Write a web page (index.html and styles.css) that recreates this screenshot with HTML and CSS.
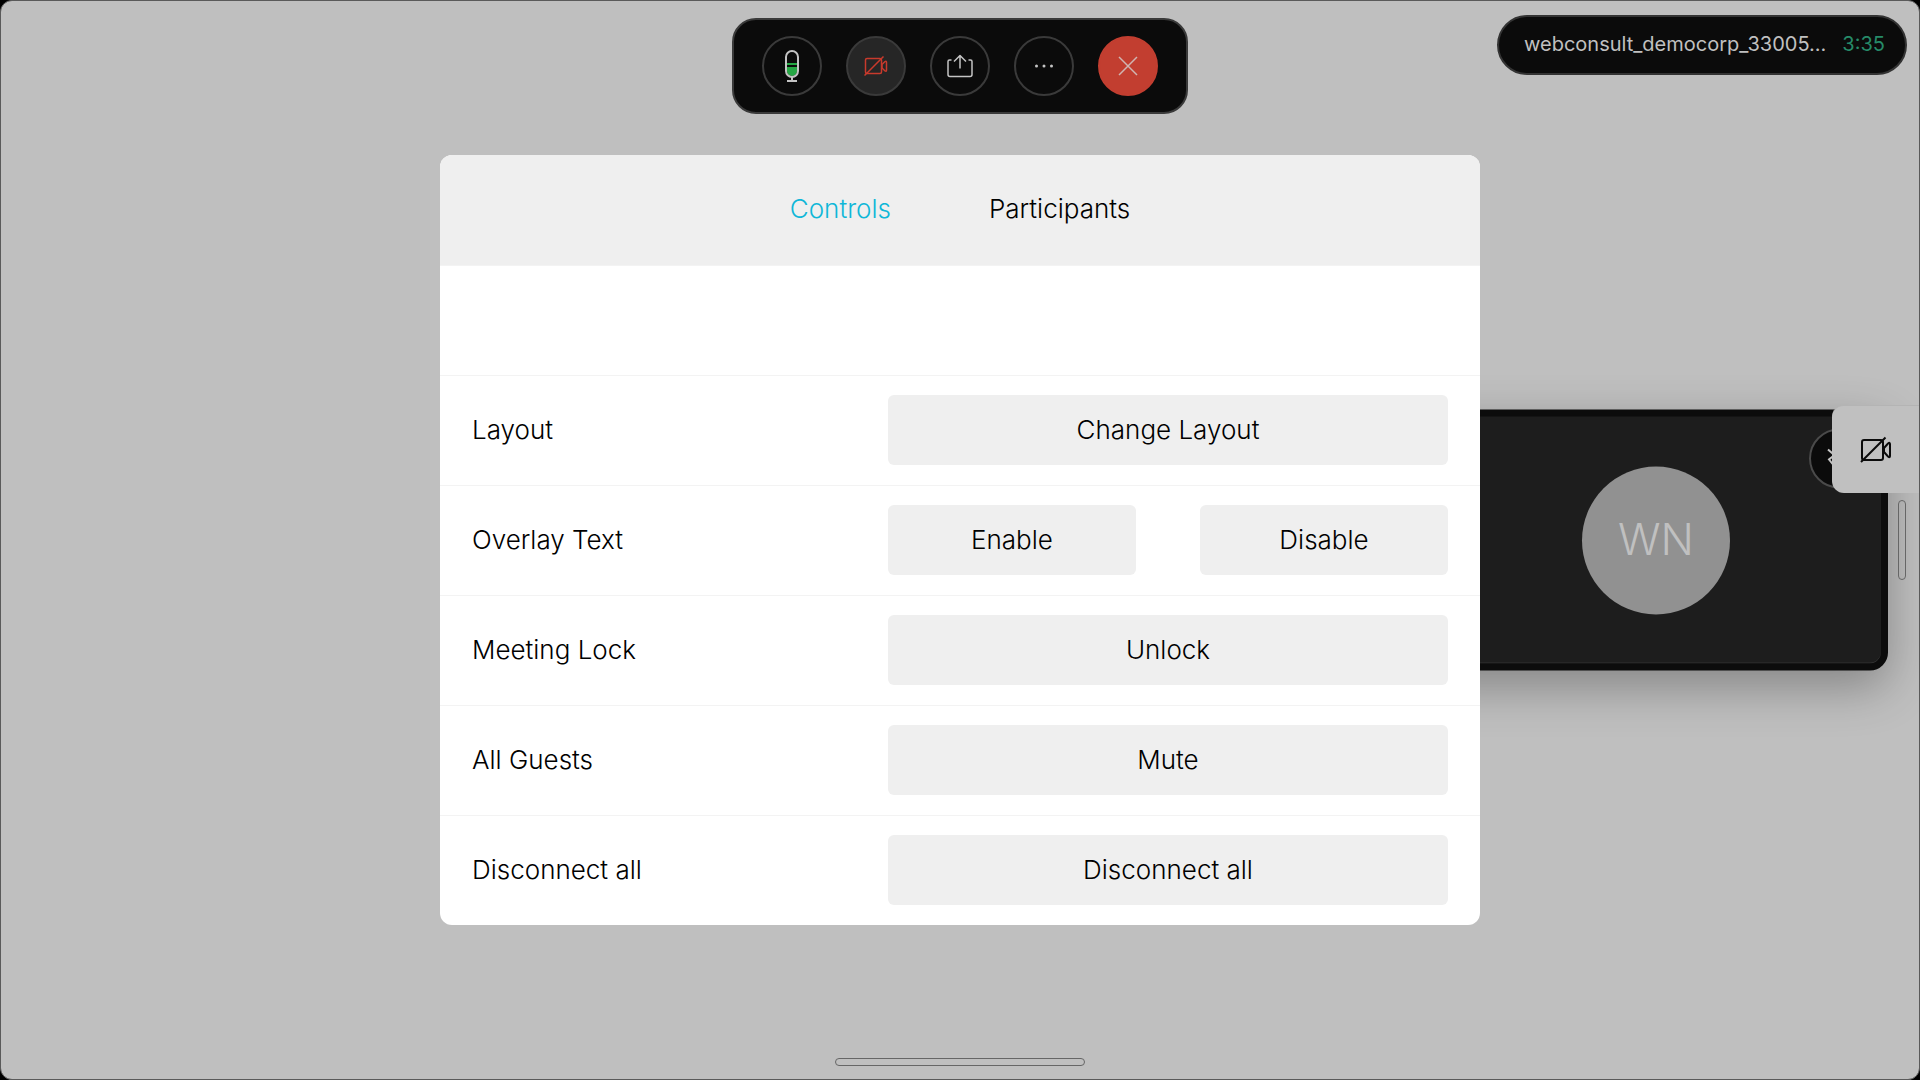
FILE: index.html
```html
<!DOCTYPE html>
<html lang="en">
<head>
<meta charset="utf-8">
<meta name="viewport" content="width=device-width, initial-scale=1">
<title>Meeting controls</title>
<link rel="stylesheet" href="styles.css">
</head>
<body>
<main class="screen">
  <header class="topbar">
    <nav class="toolbar" aria-label="Call">
      <button class="round" type="button" aria-label="Microphone">
        <svg width="16" height="34" viewBox="0 0 16 34" fill="none">
          <path d="M3 14h10v2H3z" fill="#25a744"/>
          <path d="M3 18h10v4a5 5 0 0 1-10 0z" fill="#25a744"/>
          <rect x="2" y="2" width="12" height="26" rx="6" stroke="#c4c4c4" stroke-width="2"/>
          <path d="M8 28v4M3 32h10" stroke="#c4c4c4" stroke-width="2"/>
        </svg>
      </button>
      <button class="round round-off" type="button" aria-label="Start video">
        <svg width="24" height="20" viewBox="0 0 24 20" fill="none" stroke="#c83a2c" stroke-width="1.500">
          <rect x="1.500" y="2.500" width="16" height="15" rx="1.500"/>
          <path d="M18 8.500l3-3q1.500-1 1.500 1v7.500q0 2-1.500 1l-3-3zM.500 19.500L19.500 .500" />
        </svg>
      </button>
      <button class="round" type="button" aria-label="Share">
        <svg width="28" height="24" viewBox="0 0 28 24" fill="none" stroke="#c4c4c4" stroke-width="1.500" stroke-linejoin="round">
          <path d="M5.500 6H3.500Q2 6 2 7.500v13q0 2 2 2h20q2 0 2-2v-13Q26 6 24.500 6h-2M14 14.500V2M8 7.500L14 1.500l6 6"/>
        </svg>
      </button>
      <button class="round" type="button" aria-label="More">
        <svg width="20" height="4" viewBox="0 0 20 4" fill="#c4c4c4">
          <circle cx="2.500" cy="2" r="1.500"/><circle cx="10" cy="2" r="1.500"/><circle cx="17.500" cy="2" r="1.500"/>
        </svg>
      </button>
      <button class="round round-end" type="button" aria-label="Leave">
        <svg width="20" height="20" viewBox="0 0 20 20" stroke="#d0b5b1" stroke-width="1.500"><path d="M1 1l18 18M19 1L1 19"/></svg>
      </button>
    </nav>
    <div class="call">
      <span class="call-name">webconsult_democorp_33005...</span>
      <time class="call-time">3:35</time>
    </div>
  </header>

  <section class="selfview" aria-label="Selfview">
    <div class="avatar">WN</div>
    <button class="round collapse" type="button" aria-label="Minimize selfview">
      <svg width="24" height="24" viewBox="0 0 24 24" fill="none" stroke="#c4c4c4" stroke-width="2"><path d="M1 3l8 7M7 9l-5 4 4 5"/></svg>
    </button>
  </section>

  <div class="camera-flag">
    <svg width="32" height="28" viewBox="0 0 32 28" fill="none" stroke="#0b0b0b" stroke-width="2">
      <rect x="2" y="4" width="21" height="20" rx="2"/>
      <path d="M24 12l4-4.500q2-1.500 2 .500v12q0 2-2 .500L24 16zM1 26L25.500 1.500"/>
    </svg>
  </div>
  <div class="handle handle-side"></div>
  <div class="handle handle-bottom"></div>

  <div class="overlay">
    <section class="panel">
      <nav class="tabs" aria-label="Panel pages">
        <button class="tab tab-active" type="button">Controls</button>
        <button class="tab" type="button">Participants</button>
      </nav>
      <div class="row row-blank"></div>
      <div class="row">
        <h2 class="label" id="layout">Layout</h2>
        <div class="actions" role="group" aria-labelledby="layout"><button class="action" type="button">Change Layout</button></div>
      </div>
      <div class="row">
        <h2 class="label" id="overlay-text">Overlay Text</h2>
        <div class="actions" role="group" aria-labelledby="overlay-text"><button class="action" type="button">Enable</button><button class="action" type="button">Disable</button></div>
      </div>
      <div class="row">
        <h2 class="label" id="lock">Meeting Lock</h2>
        <div class="actions" role="group" aria-labelledby="lock"><button class="action" type="button">Unlock</button></div>
      </div>
      <div class="row">
        <h2 class="label" id="guests">All Guests</h2>
        <div class="actions" role="group" aria-labelledby="guests"><button class="action" type="button">Mute</button></div>
      </div>
      <div class="row">
        <h2 class="label" id="disconnect">Disconnect all</h2>
        <div class="actions" role="group" aria-labelledby="disconnect"><button class="action" type="button">Disconnect all</button></div>
      </div>
    </section>
  </div>
</main>
</body>
</html>
```
FILE: styles.css
```css
* {
  box-sizing: border-box;
}

body {
  margin: 0;
  background: #000;
  color: #000;
  font-family: Inter, "Liberation Sans", sans-serif;
}

button {
  padding: 0;
  border: 0;
  background: none;
  color: inherit;
  font: inherit;
}

.screen {
  position: relative;
  min-height: 100vh;
  overflow: hidden;
  border: 1px solid #5a5a5a;
  border-radius: 12px;
  background: #bfbfbf;
}

.topbar {
  display: grid;
  grid-template-columns: 1fr auto 1fr;
  align-items: start;
  padding: 14px 12px;
}

.toolbar {
  grid-column: 2;
  display: flex;
  gap: 24px;
  margin-top: 3px;
  padding: 16px 28px;
  border: 2px solid #3a3a3a;
  border-radius: 24px;
  background: #0b0b0b;
}

.round {
  display: grid;
  place-items: center;
  width: 60px;
  height: 60px;
  border: 2px solid #3a3a3a;
  border-radius: 50%;
  background: #0b0b0b;
}

.round-off {
  background: #262626;
}

.round-end {
  border-color: #c23e30;
  background: #c23e30;
}

.call {
  justify-self: end;
  display: flex;
  align-items: center;
  gap: 16px;
  height: 60px;
  padding: 0 20px 2px 25px;
  border: 2px solid #333;
  border-radius: 30px;
  background: #0b0b0b;
  color: #c0c0c0;
  font-size: 20px;
}

.call-time {
  color: #268a68;
}

.selfview {
  position: absolute;
  top: 50%;
  right: 31px;
  translate: 0 -50%;
  display: grid;
  place-items: center;
  width: 464px;
  height: 261px;
  border: 7px solid #0c0c0c;
  border-radius: 18px;
  background: #1d1d1d;
  box-shadow: 0 16px 48px rgba(0, 0, 0, 0.3), inset 0 -1px #333;
}

.avatar {
  display: grid;
  place-items: center;
  width: 148px;
  height: 148px;
  padding-bottom: 4px;
  border-radius: 50%;
  background: #919191;
  color: #c0c0c0;
  font-size: 44px;
  font-weight: 300;
}

.collapse {
  position: absolute;
  top: 12px;
  right: 12px;
  border-color: #4a4a4a;
}

.camera-flag {
  position: absolute;
  top: 404px;
  right: 0;
  display: grid;
  place-items: center;
  width: 87px;
  height: 88px;
  border-top: 1px solid #b4b4b4;
  border-radius: 12px 0 0 12px;
  background: #c0c0c0;
}

.handle {
  position: absolute;
  border: 1px solid #666;
  border-radius: 4px;
}

.handle-side {
  top: 50%;
  right: 13px;
  translate: 0 -50%;
  width: 8px;
  height: 80px;
}

.handle-bottom {
  bottom: 13px;
  left: 50%;
  translate: -50% 0;
  width: 250px;
  height: 8px;
}

.overlay {
  position: absolute;
  inset: 0;
  display: grid;
  place-items: center;
}

.panel {
  width: 1040px;
  max-width: 100%;
  overflow: hidden;
  border-radius: 12px;
  background: #fff;
  font-size: 26px;
  font-weight: 300;
}

.tabs {
  display: flex;
  justify-content: center;
  gap: 98px;
  height: 110px;
  padding-bottom: 3px;
  background: #efefef;
}

.tab-active {
  color: #0fb7d8;
}

.row {
  display: grid;
  grid-template-columns: 1fr 560px;
  align-items: center;
  min-height: 110px;
  padding: 0 32px 2px;
  border-top: 1px solid #f3f3f3;
}

.label {
  margin: 0;
  font: inherit;
}

.actions {
  display: flex;
  gap: 64px;
}

.action {
  flex: 1;
  height: 70px;
  border-radius: 6px;
  background: #efefef;
}
```
